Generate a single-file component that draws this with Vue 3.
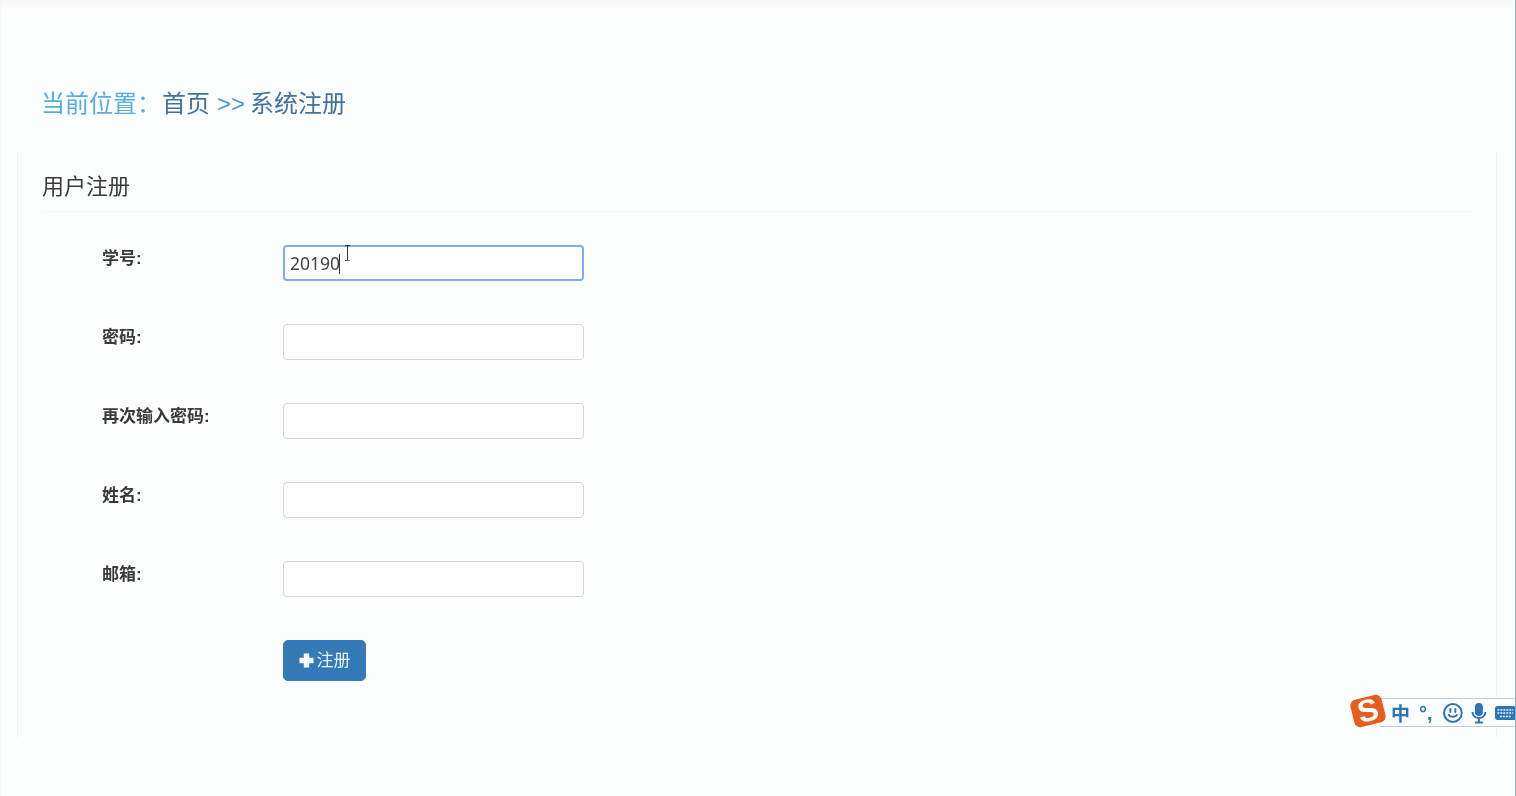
<script setup>
const fields = [
  { label: '学号:', value: '20190', active: true },
  { label: '密码:', value: '' },
  { label: '再次输入密码:', value: '' },
  { label: '姓名:', value: '' },
  { label: '邮箱:', value: '' },
]
</script>

<template>
  <div class="page">
    <div class="top-strip"></div>
    <h2 class="crumb">
      <span class="here">当前位置&#xFF1A;</span>
      <span class="link home">首页</span>
      <span class="sep">&gt;&gt;</span>
      <span class="link">系统注册</span>
    </h2>
    <section class="panel">
      <h3 class="title">用户注册</h3>
      <form class="form" @submit.prevent>
        <div v-for="f in fields" :key="f.label" class="row">
          <label class="label">{{ f.label }}</label>
          <div class="control">
            <input class="input" :class="{ active: f.active }" :value="f.value" readonly />
            <template v-if="f.active">
              <span class="caret"></span>
              <svg class="ibeam" width="7" height="16" viewBox="0 0 7 16">
                <path d="M1 .5h5M3.500.5v15M1 15.500h5" stroke="#333" fill="none" stroke-width="1" />
              </svg>
              <span class="dash"></span>
            </template>
          </div>
        </div>
        <div class="actions">
          <button class="btn" type="submit">
            <svg width="15" height="15" viewBox="0 0 14 14"><path d="M4.500 0.500h5v4h4v5h-4v4h-5v-4h-4v-5h4z" fill="#fff" /></svg>
            <span>注册</span>
          </button>
        </div>
      </form>
    </section>

    <div class="ime">
      <span class="ime-logo"><span>S</span></span>
      <span class="ime-zh">中</span>
      <span class="ime-punct">°,</span>
      <svg class="ime-smile" width="22" height="22" viewBox="0 0 22 22" fill="none" stroke="#2b74b8" stroke-width="2">
        <circle cx="11" cy="11" r="9" />
        <path d="M7 13c1 2.500 7 2.500 8 0" stroke-linecap="round" />
        <path d="M8.500 7v3M13.500 7v3" stroke-linecap="round" />
      </svg>
      <svg class="ime-mic" width="16" height="22" viewBox="0 0 16 22" fill="none">
        <rect x="4" y="1" width="8" height="13" rx="4" fill="#2b74b8" />
        <path d="M1.500 10c0 8 13 8 13 0M8 16v4M4 20.500h8" stroke="#2b74b8" stroke-width="2" />
      </svg>
      <svg class="ime-keys" width="22" height="18" viewBox="0 0 22 18" fill="none">
        <rect x="1" y="2" width="21" height="14" rx="2.500" fill="#2b74b8" />
        <path d="M3.500 6h16M3.500 9h16M6 12.500h11" stroke="#e6f1fa" stroke-width="1.500" stroke-dasharray="2 1" />
      </svg>
    </div>
  </div>
</template>

<style scoped>
.page {
  position: relative;
  height: 796px;
  overflow: hidden;
  box-sizing: border-box;
  background: #fcfdfd;
  border-right: 1px solid #7fb4c6;
  border-left: 1px solid #f1f8f6;
  font-family: "Liberation Sans", "Noto Sans CJK SC", sans-serif;
  color: #333;
  filter: blur(0.45px);
}
.top-strip {
  height: 8px;
  background: linear-gradient(#f7f8f7, #fafbfa);
}
.crumb {
  margin: 0;
  height: 144px;
  box-sizing: border-box;
  padding: 66px 0 0 40px;
  display: flex;
  align-items: flex-start;
  font-size: 24px;
  font-weight: 400;
  line-height: 60px;
  white-space: nowrap;
}
.here { color: #58aede; width: 121px; }
.link { color: #40729f; }
.sep { color: #4a9ad4; margin: 0 5px 0 7px; }
.panel {
  margin-left: 16px;
  width: 1480px;
  height: 586px;
  box-sizing: border-box;
  border-left: 1px solid #f1f2f1;
  border-right: 1px solid #f3f4f3;
  padding: 0 21px 0 24px;
}
.title {
  margin: 0;
  height: 60px;
  line-height: 70px;
  font-size: 22px;
  font-weight: 400;
  color: #3b3b3b;
  border-bottom: 1px solid #f6f7f6;
  box-sizing: border-box;
}
.form {
  padding: 33px 0 0 60px;
}
.row {
  display: grid;
  grid-template-columns: 181px 301px;
  height: 79px;
}
.label {
  font-size: 17px;
  font-weight: 700;
  line-height: 27px;
  color: #3a3a3a;
}
.control {
  position: relative;
  height: 36px;
}
.input {
  display: block;
  width: 100%;
  height: 36px;
  box-sizing: border-box;
  padding: 0 6px;
  background: #fdfefd;
  border: 1px solid #d6d6d6;
  border-radius: 4px;
  font-family: "Noto Sans", "Liberation Sans", sans-serif;
  font-size: 17.500px;
  color: #444;
  outline: none;
}
.input.active {
  border: 2px solid #84a9ee;
  padding: 0 5px;
}
.caret {
  position: absolute;
  left: 56px;
  top: 9px;
  width: 1px;
  height: 20px;
  background: #333;
}
.ibeam {
  position: absolute;
  left: 61px;
  top: 0;
}
.dash {
  position: absolute;
  left: 63px;
  top: 15px;
  width: 4px;
  height: 1px;
  background: #777;
}
.actions {
  padding: 0 0 0 181px;
}
.btn {
  display: flex;
  align-items: center;
  justify-content: center;
  gap: 3px;
  width: 83px;
  height: 41px;
  padding: 0 0 5px;
  border: 1px solid #337ab7;
  border-radius: 5px;
  background: #337ab7;
  color: #e8f1f8;
  font-family: inherit;
  font-size: 17px;
}
.btn svg { margin-top: 4px; }
.ime {
  position: absolute;
  right: -1px;
  top: 698px;
  width: 136px;
  height: 29px;
  box-sizing: border-box;
  display: flex;
  align-items: center;
  padding: 1px 0 0 11px;
  background: #fbfdfe;
  border-top: 1px solid #c6ccd0;
  border-bottom: 1px solid #c6ccd0;
  white-space: nowrap;
}
.ime-logo {
  position: absolute;
  left: -28px;
  top: -2px;
  width: 32px;
  height: 28px;
  border-radius: 6px;
  background: #e85c1e;
  transform: rotate(-14deg);
  display: flex;
  align-items: center;
  justify-content: center;
  color: #fff;
  font: 900 31px/28px "Liberation Sans", sans-serif;
}
.ime-zh {
  width: 19px;
  color: #2b74b8;
  font: 700 19px/26px "Noto Sans CJK SC", sans-serif;
}
.ime-punct {
  width: 23px;
  margin-left: 9px;
  color: #2b74b8;
  font: 700 20px/26px "Liberation Sans", sans-serif;
}
.ime-mic { margin-left: 8px; }
.ime-keys { margin-left: 7px; }
</style>

<style>
html, body { margin: 0; background: #fcfdfd; }
</style>
